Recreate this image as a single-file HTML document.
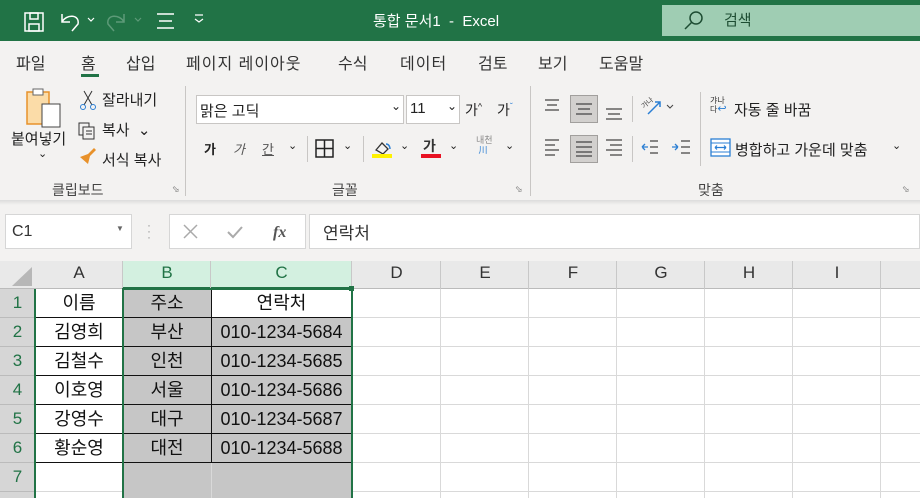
<!DOCTYPE html><html><head><meta charset="utf-8"><style>
*{margin:0;padding:0;box-sizing:border-box}
html,body{width:920px;height:498px;overflow:hidden}
body{background:#fff;font-family:"Liberation Sans","Noto Sans CJK KR",sans-serif;position:relative;color:#222}
.a{position:absolute}
.t{position:absolute;white-space:nowrap}
.cell{position:absolute;text-align:center;font-size:18px;line-height:29px;height:29px;color:#111}
</style></head><body>
<div class="a" style="left:0;top:0;width:920px;height:41px;background:#217346"></div>
<svg class="a" style="left:0;top:0" width="220" height="41">
<g stroke="#fff" stroke-width="1.5" fill="none">
<rect x="25" y="13" width="18" height="18"/><rect x="30" y="13" width="8" height="6"/><rect x="29" y="24" width="10" height="7"/>
<path d="M62 14v8h8M62 22 C66 14 80 14 78 24 L72 31"/>
<path d="M88 18l3 3 3-3" stroke-width="1.2"/>
</g>
<g stroke="#5d9a78" stroke-width="1.5" fill="none"><path d="M124 14v8h-8M124 22C120 14 106 14 108 24L114 31"/><path d="M135 18l3 3 3-3" stroke-width="1.2"/></g>
<g stroke="#fff" stroke-width="1.5"><path d="M157 14h17M159 21h13M157 28h17"/><path d="M195 15h8M195 19l4 3 4-3" fill="none" stroke-width="1.2"/></g>
</svg>
<div class="t" style="left:373px;top:10px;font-size:15px;color:#fff">통합 문서1 &nbsp;-&nbsp; Excel</div>
<div class="a" style="left:662px;top:5px;width:258px;height:31px;background:#9fcdb3"></div>
<svg class="a" style="left:680px;top:9px" width="26" height="24"><circle cx="16" cy="9" r="6" stroke="#1e4d33" stroke-width="1.5" fill="none"/><path d="M12 13l-7 7" stroke="#1e4d33" stroke-width="1.5"/></svg>
<div class="t" style="left:724px;top:9px;font-size:15px;color:#1e4d33">검색</div>
<div class="a" style="left:0;top:41px;width:920px;height:160px;background:#f3f2f1"></div>
<div class="t" style="left:16px;top:50px;font-size:16px;color:#333">파일</div>
<div class="t" style="left:81px;top:50px;font-size:16px;color:#333">홈</div>
<div class="a" style="left:81px;top:74px;width:18px;height:3px;background:#217346"></div>
<div class="t" style="left:126px;top:50px;font-size:16px;color:#333">삽입</div>
<div class="t" style="left:186px;top:50px;font-size:16px;color:#333;letter-spacing:1px">페이지 레이아웃</div>
<div class="t" style="left:338px;top:50px;font-size:16px;color:#333">수식</div>
<div class="t" style="left:400px;top:50px;font-size:16px;color:#333;letter-spacing:1px">데이터</div>
<div class="t" style="left:478px;top:50px;font-size:16px;color:#333">검토</div>
<div class="t" style="left:538px;top:50px;font-size:16px;color:#333">보기</div>
<div class="t" style="left:599px;top:50px;font-size:16px;color:#333">도움말</div>
<svg class="a" style="left:20px;top:86px" width="45" height="45"><rect x="7" y="6" width="22" height="32" fill="#fbdca8" stroke="#e8912a" stroke-width="1.5"/><rect x="13" y="3" width="10" height="6" fill="#fff" stroke="#666"/><rect x="22" y="18" width="18" height="23" fill="#fff" stroke="#444"/></svg>
<div class="t" style="left:11px;top:128px;font-size:15px">붙여넣기</div>
<div class="t" style="left:38px;top:147px;font-size:11px">⌄</div>
<svg class="a" style="left:78px;top:89px" width="20" height="80"><g stroke="#333" fill="none"><path d="M6 2l8 14M14 2L6 16"/><circle cx="5" cy="18" r="2.5" stroke="#2b7fd4"/><circle cx="15" cy="18" r="2.5" stroke="#2b7fd4"/><rect x="1" y="34" width="10" height="12"/><path d="M5 38h11v12H5z" fill="#f3f2f1"/><path d="M8 42h6M8 45h6"/></g><path d="M2 68l8-3 6-6 2 2-6 6-2 8z" fill="#e8912a"/></svg>
<div class="t" style="left:102px;top:89px;font-size:15px">잘라내기</div>
<div class="t" style="left:102px;top:119px;font-size:15px">복사 &nbsp;⌄</div>
<div class="t" style="left:102px;top:149px;font-size:15px">서식 복사</div>
<div class="t" style="left:52px;top:180px;font-size:14px;color:#444">클립보드</div>
<div class="t" style="left:172px;top:184px;font-size:9px;color:#666">⬂</div>
<div class="a" style="left:185px;top:86px;width:1px;height:110px;background:#c8c6c4"></div>
<div class="a" style="left:196px;top:95px;width:208px;height:29px;background:#fff;border:1px solid #c8c6c4"></div>
<div class="t" style="left:200px;top:100px;font-size:15px">맑은 고딕</div>
<div class="t" style="left:391px;top:99px;font-size:12px">⌄</div>
<div class="a" style="left:406px;top:95px;width:54px;height:29px;background:#fff;border:1px solid #c8c6c4"></div>
<div class="t" style="left:410px;top:100px;font-size:15px">11</div>
<div class="t" style="left:447px;top:99px;font-size:12px">⌄</div>
<div class="t" style="left:465px;top:100px;font-size:14px">가<sup style="font-size:9px">^</sup></div>
<div class="t" style="left:497px;top:100px;font-size:14px">가<sup style="font-size:9px;color:#2b7fd4">ˇ</sup></div>
<div class="t" style="left:204px;top:139px;font-size:13px;font-weight:bold">가</div>
<div class="t" style="left:233px;top:139px;font-size:13px;font-style:italic;color:#555">가</div>
<div class="t" style="left:262px;top:139px;font-size:13px;text-decoration:underline;color:#555">간</div>
<div class="t" style="left:288px;top:139px;font-size:11px">⌄</div>
<div class="a" style="left:307px;top:136px;width:1px;height:26px;background:#c8c6c4"></div>
<svg class="a" style="left:315px;top:139px" width="20" height="20"><rect x="1" y="1" width="17" height="17" fill="none" stroke="#222" stroke-width="1.5"/><path d="M9.5 1v17M1 9.5h17" stroke="#222" stroke-width="1.5"/></svg>
<div class="t" style="left:343px;top:139px;font-size:11px">⌄</div>
<div class="a" style="left:363px;top:136px;width:1px;height:26px;background:#c8c6c4"></div>
<svg class="a" style="left:372px;top:138px" width="22" height="22"><path d="M4 12l6-7 6 6-5 5z" fill="none" stroke="#333" stroke-width="1.3"/><path d="M14 6c3 0 4 3 4 5" stroke="#2b7fd4" stroke-width="1.5" fill="none"/><rect x="0" y="16" width="20" height="4" fill="#fff200"/></svg>
<div class="t" style="left:400px;top:139px;font-size:11px">⌄</div>
<div class="t" style="left:423px;top:136px;font-size:14px;font-weight:bold;color:#333">가</div>
<div class="a" style="left:421px;top:154px;width:20px;height:4px;background:#e81123"></div>
<div class="t" style="left:449px;top:139px;font-size:11px">⌄</div>
<div class="t" style="left:476px;top:135px;font-size:9px;color:#888;line-height:10px">내천<br><span style="color:#2b7fd4">&nbsp;川</span></div>
<div class="t" style="left:505px;top:139px;font-size:11px">⌄</div>
<div class="t" style="left:332px;top:180px;font-size:14px;color:#444">글꼴</div>
<div class="t" style="left:515px;top:184px;font-size:9px;color:#666">⬂</div>
<div class="a" style="left:530px;top:86px;width:1px;height:110px;background:#c8c6c4"></div>
<svg class="a" style="left:540px;top:94px" width="160" height="70">
<g stroke="#444" stroke-width="1.3">
<path d="M5 6h14M7 11h10M5 16h14"/>
<rect x="30.5" y="1.5" width="27" height="27" fill="#d2d0ce" stroke="#a19f9d" stroke-width="1"/>
<path d="M36 10h16M38 15h12M36 20h16"/>
<path d="M66 15h16M68 20h12M66 25h16"/>
<path d="M5 46h14M5 51h10M5 56h14M5 61h10" stroke-width="1.2"/>
<rect x="30.5" y="41.5" width="27" height="27" fill="#d2d0ce" stroke="#a19f9d" stroke-width="1"/>
<path d="M36 48h16M36 53h16M36 58h16M36 62h16"/>
<path d="M66 46h16M70 51h12M66 56h16M70 61h12" stroke-width="1.2"/>
<path d="M110 47h8M110 53h8M110 59h8M141 47h9M141 53h9M141 59h9"/>
</g>
<path d="M108 53h-6M102 53l3-3M102 53l3 3M132 53h6M138 53l-3-3M138 53l-3 3" stroke="#2b7fd4" stroke-width="1.3" fill="none"/>
<path d="M108 20l12-12M115 8h5v5" stroke="#2b7fd4" stroke-width="1.5" fill="none"/>
<text x="101" y="13" font-size="7" fill="#444" transform="rotate(-40 105 10)">가나</text>
<path d="M127 11l3 3 3-3" stroke="#444" fill="none"/>
</svg>
<div class="a" style="left:632px;top:96px;width:1px;height:26px;background:#c8c6c4"></div>
<div class="a" style="left:632px;top:136px;width:1px;height:26px;background:#c8c6c4"></div>
<div class="a" style="left:700px;top:92px;width:1px;height:74px;background:#c8c6c4"></div>
<div class="t" style="left:710px;top:97px;font-size:8px;line-height:8px;color:#333">갸나<br>다<span style="color:#2b7fd4;font-size:11px">↩</span></div>
<div class="t" style="left:734px;top:99px;font-size:15px">자동 줄 바꿈</div>
<svg class="a" style="left:710px;top:138px" width="22" height="20"><rect x="1" y="1" width="19" height="17" fill="#fff" stroke="#2b7fd4" stroke-width="1.3"/><path d="M1 5h19M1 14h19" stroke="#2b7fd4"/><path d="M5 9.5h11M5 9.5l2-2M5 9.5l2 2M16 9.5l-2-2M16 9.5l-2 2" stroke="#2b7fd4" stroke-width="1.2"/></svg>
<div class="t" style="left:735px;top:139px;font-size:15px">병합하고 가운데 맞춤</div>
<div class="t" style="left:892px;top:139px;font-size:11px">⌄</div>
<div class="t" style="left:698px;top:180px;font-size:14px;color:#444">맞춤</div>
<div class="t" style="left:902px;top:184px;font-size:9px;color:#666">⬂</div>
<div class="a" style="left:0;top:200px;width:920px;height:5px;background:linear-gradient(#dcdcdc,#f3f2f1)"></div>
<div class="a" style="left:0;top:205px;width:920px;height:56px;background:#f3f2f1"></div>
<div class="a" style="left:5px;top:214px;width:127px;height:35px;background:#fff;border:1px solid #d6d6d6"></div>
<div class="t" style="left:12px;top:223px;font-size:16px;color:#333">C1</div>
<div class="t" style="left:116px;top:224px;font-size:8px;color:#666">▼</div>
<div class="t" style="left:147px;top:222px;font-size:12px;color:#999;line-height:6px">·<br>·<br>·</div>
<div class="a" style="left:169px;top:214px;width:137px;height:35px;background:#fff;border:1px solid #d6d6d6"></div>
<svg class="a" style="left:180px;top:222px" width="110" height="20"><path d="M4 3l13 13M17 3L4 16" stroke="#aaa" stroke-width="1.5"/><path d="M48 10l5 5 9-10" stroke="#aaa" stroke-width="2" fill="none"/><text x="93" y="15" font-family="Liberation Serif" font-style="italic" font-weight="bold" font-size="16" fill="#555">fx</text></svg>
<div class="a" style="left:309px;top:214px;width:611px;height:35px;background:#fff;border:1px solid #d6d6d6"></div>
<div class="t" style="left:323px;top:219px;font-size:17px;color:#333">연락처</div>
<div class="a" style="left:0;top:261px;width:920px;height:28px;background:#e9e9e9;border-bottom:1px solid #bbb"></div>
<div class="a" style="left:123px;top:261px;width:229px;height:28px;background:#d3f0e0;border-bottom:2px solid #217346"></div>
<svg class="a" style="left:10px;top:267px" width="22" height="20"><path d="M22 0v19H2z" fill="#b7b7b7"/></svg>
<div class="a" style="left:0;top:289px;width:35px;height:209px;background:#d6d6d6;border-right:1px solid #bbb"></div>
<div id="g"></div>
<script>
var cols=[35,123,211,352,441,529,617,705,793,881,970],L="ABCDEFGHI",h="";
for(var i=0;i<9;i++){var x=cols[i],w=cols[i+1]-x;var sel=i==1||i==2;
h+='<div class="t" style="left:'+x+'px;top:263px;width:'+w+'px;text-align:center;font-size:17px;color:'+(sel?'#217346':'#333')+'">'+L[i]+'</div>';
h+='<div class="a" style="left:'+(x+w-1)+'px;top:261px;width:1px;height:28px;background:#c8c8c8"></div>';
h+='<div class="a" style="left:'+(x+w-1)+'px;top:289px;width:1px;height:209px;background:#d9d9d9"></div>';}
for(var r=0;r<7;r++){var y=289+r*29;
h+='<div class="a" style="left:35px;top:'+(y+28)+'px;width:885px;height:1px;background:#d9d9d9"></div>';
h+='<div class="a" style="left:0;top:'+(y+28)+'px;width:35px;height:1px;background:#bbb"></div>';
h+='<div class="t" style="left:0;top:'+(y+4)+'px;width:35px;text-align:center;font-size:17px;color:#217346">'+(r+1)+'</div>';}
h+='<div class="a" style="left:123px;top:289px;width:88px;height:209px;background:#c6c6c6"></div>';
h+='<div class="a" style="left:211px;top:318px;width:141px;height:180px;background:#c6c6c6"></div>';
h+='<div class="a" style="left:211px;top:463px;width:1px;height:35px;background:#d9d9d9"></div>';
for(var r=1;r<=6;r++){h+='<div class="a" style="left:35px;top:'+(289+r*29-1)+'px;width:317px;height:1px;background:#111"></div>';}
h+='<div class="a" style="left:123px;top:289px;width:1px;height:174px;background:#111"></div>';
h+='<div class="a" style="left:211px;top:289px;width:1px;height:174px;background:#111"></div>';
var d=[["이름","주소","연락처"],["김영희","부산","010-1234-5684"],["김철수","인천","010-1234-5685"],["이호영","서울","010-1234-5686"],["강영수","대구","010-1234-5687"],["황순영","대전","010-1234-5688"]];
for(var r=0;r<6;r++)for(var c=0;c<3;c++){var x=cols[c],w=cols[c+1]-x;
h+='<div class="cell" style="left:'+x+'px;top:'+(289+r*29)+'px;width:'+w+'px">'+d[r][c]+'</div>';}
h+='<div class="a" style="left:122px;top:288px;width:231px;height:215px;border:2px solid #217346"></div>';
h+='<div class="a" style="left:349px;top:286px;width:5px;height:5px;background:#217346"></div>';
h+='<div class="a" style="left:34px;top:289px;width:2px;height:209px;background:#217346"></div>';
document.getElementById("g").innerHTML=h;
</script>
</body></html>
